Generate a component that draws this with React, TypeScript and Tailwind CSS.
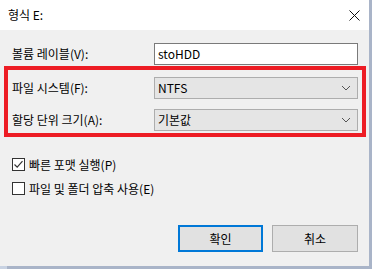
const font = { fontFamily: '"Noto Sans CJK KR", "Noto Sans", sans-serif' };

const Chevron = () => (
  <svg width="10" height="6" viewBox="0 0 10 6" className="shrink-0">
    <path d="M1 1 L5 5 L9 1" fill="none" stroke="#555" strokeWidth="1" />
  </svg>
);

const Select = ({ value }: { value: string }) => (
  <div className="flex h-[22px] w-[204px] items-center justify-between border border-[#adadad] bg-[#e5e5e5] pl-[3px] pr-[6px]">
    <span className="text-[12px] leading-none text-black">{value}</span>
    <Chevron />
  </div>
);

const Check = ({ checked, label }: { checked?: boolean; label: string }) => (
  <div className="flex items-center gap-[4px]">
    <div className="flex h-[13px] w-[13px] items-center justify-center border border-[#333] bg-white">
      {checked && (
        <svg width="11" height="11" viewBox="0 0 11 11">
          <path d="M1.5 5.5 L4.2 8.2 L9.5 2.2" fill="none" stroke="#333" strokeWidth="1.2" />
        </svg>
      )}
    </div>
    <span className="text-[12px] leading-none text-black">{label}</span>
  </div>
);

export default function App() {
  return (
    <div className="flex h-[269px] w-[372px] flex-col bg-[#f0f0f0]" style={font}>
      <div className="flex h-[266px]">
        <div className="flex w-[369px] flex-col">
          {/* title bar */}
          <div className="flex h-[30px] items-center justify-between bg-white pl-[8px] pr-[9px]">
            <span className="text-[12px] leading-none text-black">형식 E:</span>
            <svg width="11" height="11" viewBox="0 0 11 11">
              <path d="M0.5 0.5 L10.5 10.5 M10.5 0.5 L0.5 10.5" stroke="#111" strokeWidth="1" />
            </svg>
          </div>

          {/* body */}
          <div className="flex flex-1 flex-col bg-[#f0f0f0]">
            <div className="mt-[13px] flex h-[22px] items-center pl-[12px]">
              <span className="w-[142px] text-[12px] leading-none text-black">볼륨 레이블(V):</span>
              <div className="flex h-[22px] w-[204px] items-center border border-[#7a7a7a] bg-white pl-[3px]">
                <span className="text-[12px] leading-none text-black">stoHDD</span>
              </div>
            </div>

            <div className="ml-[4px] mt-[1px] flex h-[71px] w-[362px] flex-col border-[4px] border-[#ed1c24] pl-[4px] pt-[7px]">
              <div className="flex items-center">
                <span className="w-[142px] text-[12px] leading-none text-black">파일 시스템(F):</span>
                <Select value="NTFS" />
              </div>
              <div className="mt-[10px] flex items-center">
                <span className="w-[142px] text-[12px] leading-none text-black">할당 단위 크기(A):</span>
                <Select value="기본값" />
              </div>
            </div>

            <div className="ml-[12px] mt-[21px] flex flex-col gap-[11px]">
              <Check checked label="빠른 포맷 실행(P)" />
              <Check label="파일 및 폴더 압축 사용(E)" />
            </div>

            <div className="ml-[178px] mt-[30px] flex gap-[9px]">
              <div className="flex h-[27px] w-[85px] items-center justify-center border-2 border-[#0078d7] bg-[#e1e1e1]">
                <span className="text-[12px] leading-none text-black">확인</span>
              </div>
              <div className="flex h-[27px] w-[86px] items-center justify-center border border-[#adadad] bg-[#e1e1e1]">
                <span className="text-[12px] leading-none text-black">취소</span>
              </div>
            </div>
          </div>
        </div>
        <div className="w-[3px] bg-[#a9b4c8]" />
      </div>
      <div className="flex h-[3px]">
        <div className="w-[7px] bg-[#c8d2e2]" />
        <div className="flex-1 bg-[#a9b4c8]" />
      </div>
    </div>
  );
}
